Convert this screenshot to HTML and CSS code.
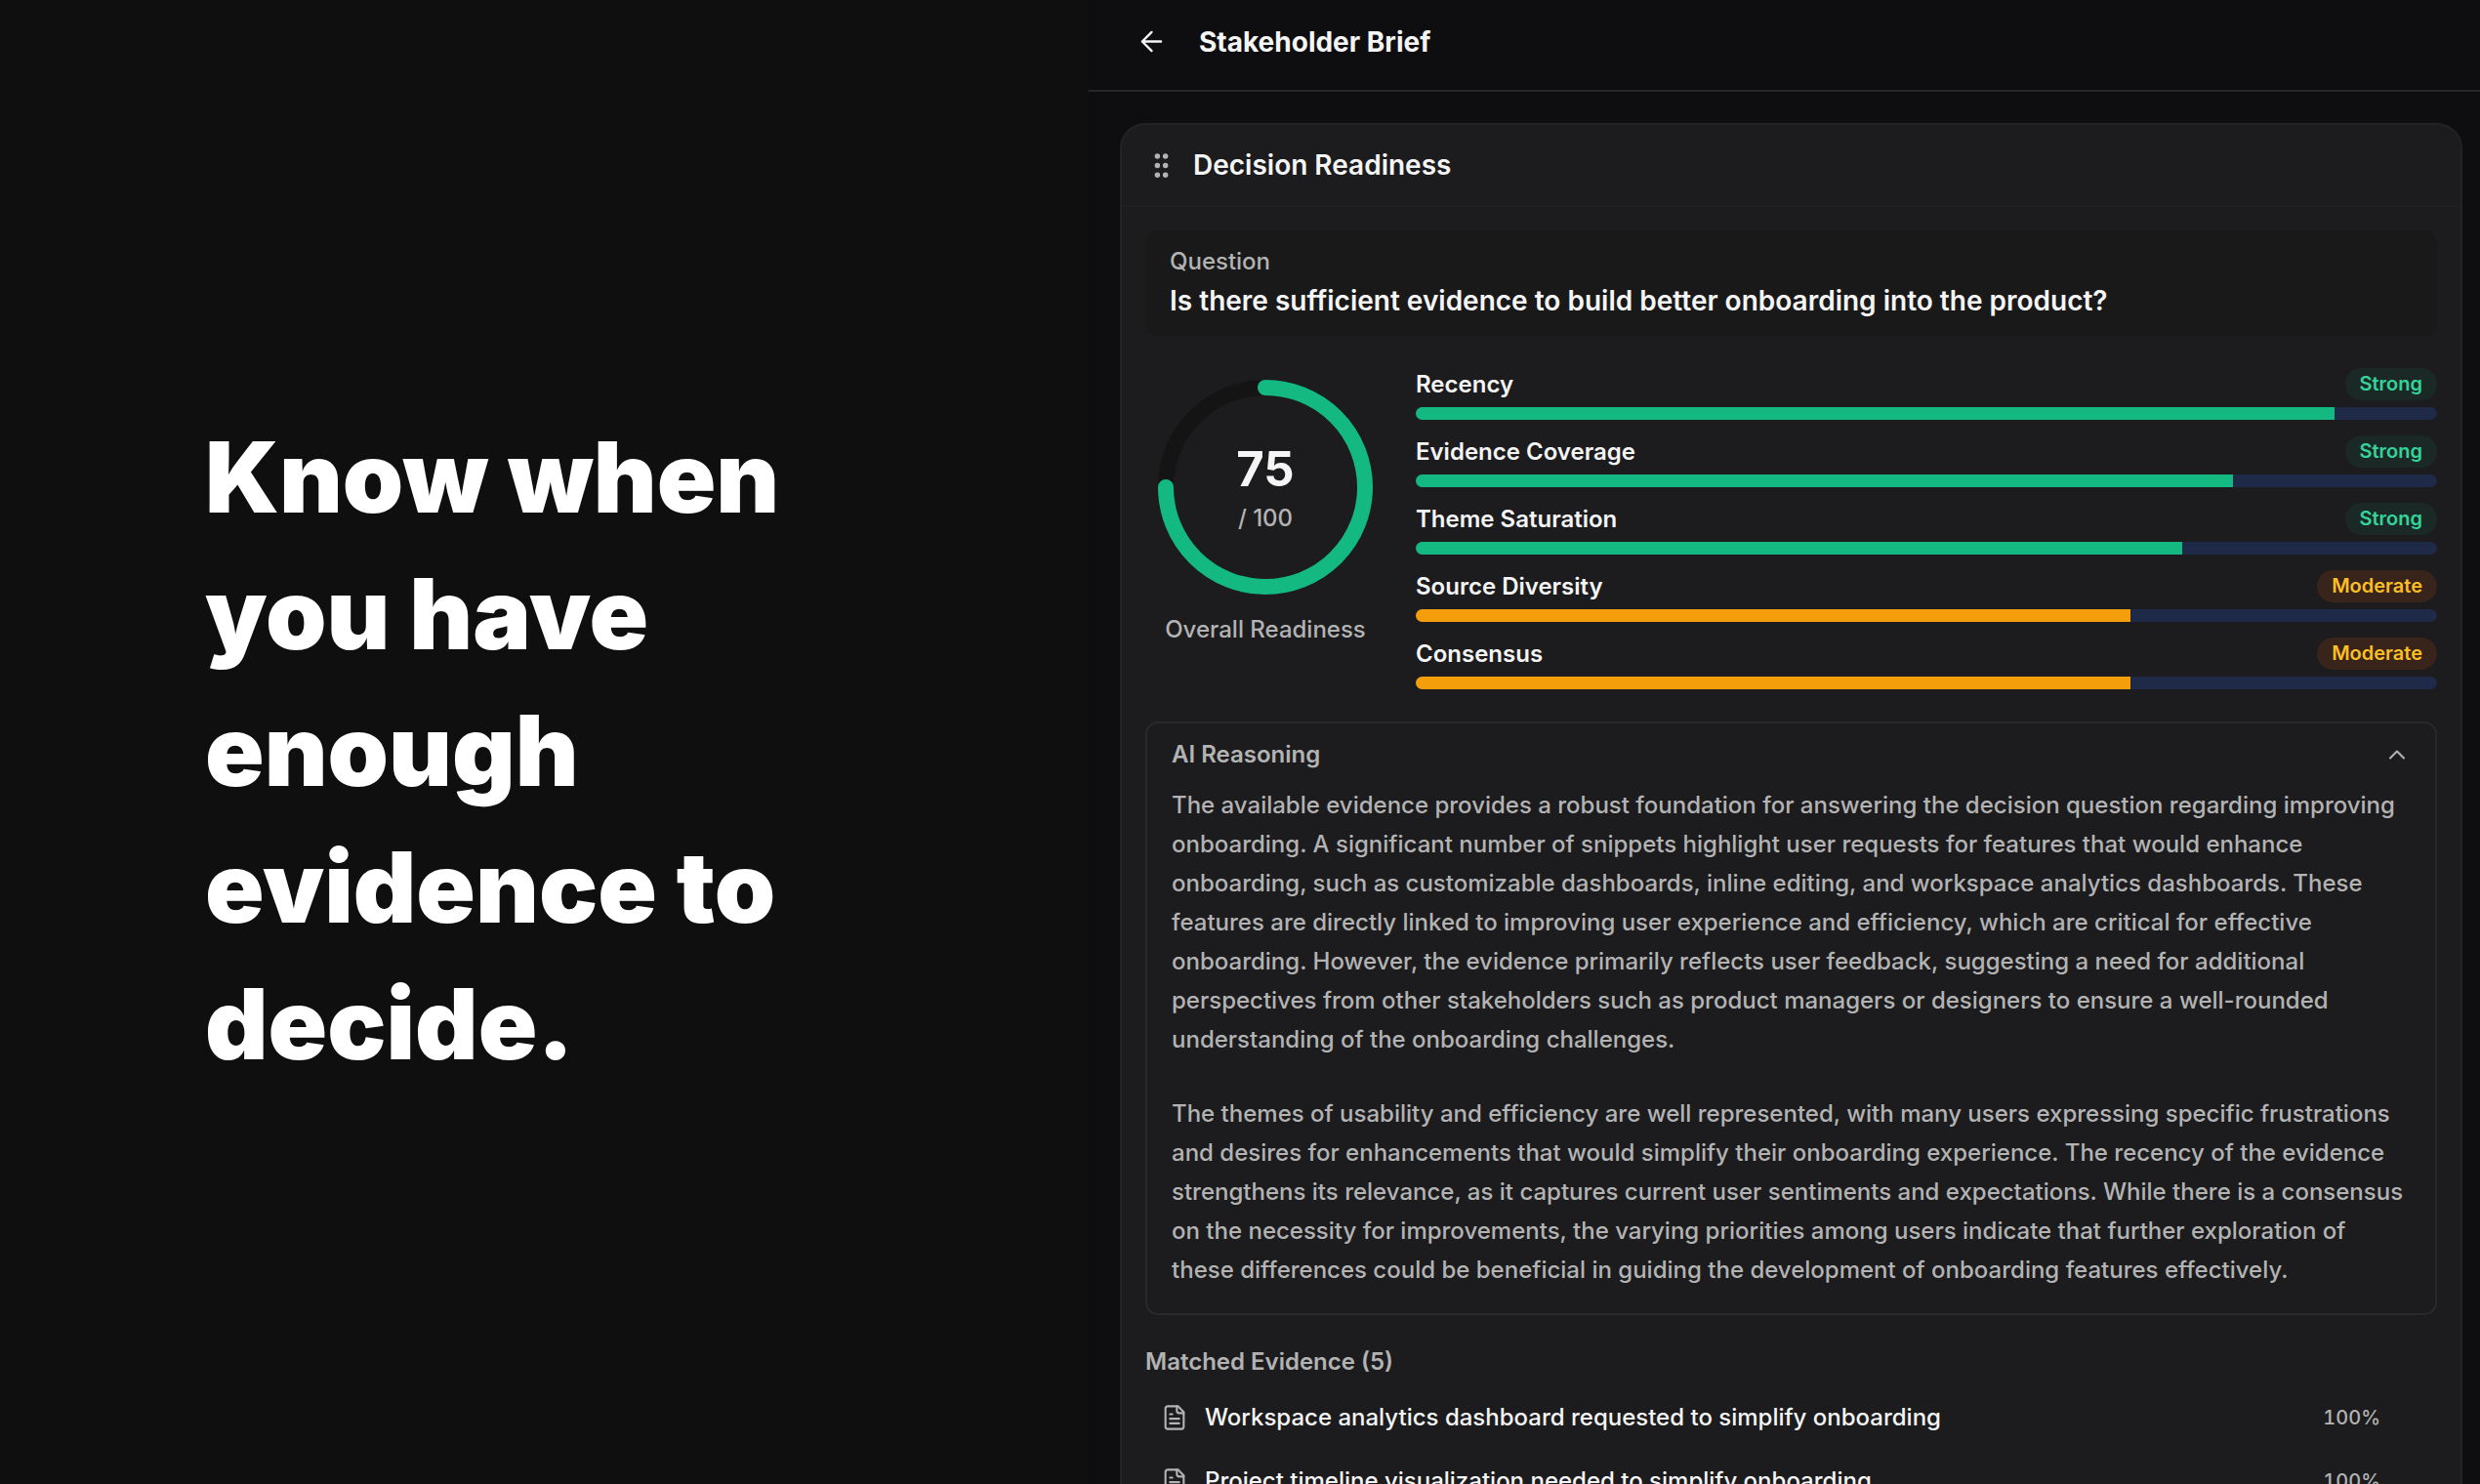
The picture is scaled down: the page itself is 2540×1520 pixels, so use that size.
FILE: index.html
```html
<!DOCTYPE html>
<html lang="en">

<head>
  <meta charset="UTF-8" />
  <meta name="viewport" content="width=device-width, initial-scale=1" />
  <title>Stakeholder Brief</title>
  <link rel="stylesheet" href="styles.css">
</head>

<body>
  <section class="hero">
    <h1>Know when you have enough evidence to decide.</h1>
  </section>

  <main class="panel">
    <header class="panel-header">
      <button class="icon-button" aria-label="Back">
        <svg class="icon-lg" viewBox="0 0 24 24"><path d="M12 19l-7-7 7-7M19 12H5" /></svg>
      </button>
      <h2>Stakeholder Brief</h2>
    </header>

    <article class="card">
      <div class="card-header">
        <svg class="icon-lg grip muted" viewBox="0 0 24 24">
          <circle cx="9" cy="5" r="1" /><circle cx="9" cy="12" r="1" /><circle cx="9" cy="19" r="1" />
          <circle cx="15" cy="5" r="1" /><circle cx="15" cy="12" r="1" /><circle cx="15" cy="19" r="1" />
        </svg>
        <h3>Decision Readiness</h3>
      </div>

      <div class="card-body">
        <div class="question">
          <p class="label">Question</p>
          <p class="question-text">Is there sufficient evidence to build better onboarding into the product?</p>
        </div>

        <div class="scores">
          <div class="gauge">
            <div class="ring">
              <svg viewBox="0 0 220 220">
                <circle class="ring-track" cx="110" cy="110" r="102" />
                <circle class="ring-value" cx="110" cy="110" r="102" pathLength="100" stroke-dasharray="75 100" transform="rotate(-90 110 110)" />
              </svg>
              <div class="ring-text">
                <strong>75</strong>
                <span>/ 100</span>
              </div>
            </div>
            <p>Overall Readiness</p>
          </div>

          <ul class="metrics">
            <li>
              <div class="metric-head"><span>Recency</span><span class="badge strong">Strong</span></div>
              <div class="bar strong"><div style="width: 90%"></div></div>
            </li>
            <li>
              <div class="metric-head"><span>Evidence Coverage</span><span class="badge strong">Strong</span></div>
              <div class="bar strong"><div style="width: 80%"></div></div>
            </li>
            <li>
              <div class="metric-head"><span>Theme Saturation</span><span class="badge strong">Strong</span></div>
              <div class="bar strong"><div style="width: 75%"></div></div>
            </li>
            <li>
              <div class="metric-head"><span>Source Diversity</span><span class="badge moderate">Moderate</span></div>
              <div class="bar moderate"><div style="width: 70%"></div></div>
            </li>
            <li>
              <div class="metric-head"><span>Consensus</span><span class="badge moderate">Moderate</span></div>
              <div class="bar moderate"><div style="width: 70%"></div></div>
            </li>
          </ul>
        </div>

        <div class="reasoning">
          <button class="reasoning-toggle" aria-expanded="true">
            <span>AI Reasoning</span>
            <svg class="icon-md" viewBox="0 0 24 24"><path d="M18 15l-6-6-6 6" /></svg>
          </button>
          <p>The available evidence provides a robust foundation for answering the decision question regarding improving onboarding. A significant number of snippets highlight user requests for features that would enhance onboarding, such as customizable dashboards, inline editing, and workspace analytics dashboards. These features are directly linked to improving user experience and efficiency, which are critical for effective onboarding. However, the evidence primarily reflects user feedback, suggesting a need for additional perspectives from other stakeholders such as product managers or designers to ensure a well-rounded understanding of the onboarding challenges.</p>
          <p>The themes of usability and efficiency are well represented, with many users expressing specific frustrations and desires for enhancements that would simplify their onboarding experience. The recency of the evidence strengthens its relevance, as it captures current user sentiments and expectations. While there is a consensus on the necessity for improvements, the varying priorities among users indicate that further exploration of these differences could be beneficial in guiding the development of onboarding features effectively.</p>
        </div>

        <h4>Matched Evidence (5)</h4>
        <ul class="evidence">
          <li>
            <svg class="icon-md muted" viewBox="0 0 24 24"><path d="M15 2H6a2 2 0 0 0-2 2v16a2 2 0 0 0 2 2h12a2 2 0 0 0 2-2V7z" /><path d="M14 2v4a2 2 0 0 0 2 2h4M10 9H8M16 13H8M16 17H8" /></svg>
            <span class="evidence-title">Workspace analytics dashboard requested to simplify onboarding</span>
            <span class="match">100%</span>
          </li>
          <li>
            <svg class="icon-md muted" viewBox="0 0 24 24"><path d="M15 2H6a2 2 0 0 0-2 2v16a2 2 0 0 0 2 2h12a2 2 0 0 0 2-2V7z" /><path d="M14 2v4a2 2 0 0 0 2 2h4M10 9H8M16 13H8M16 17H8" /></svg>
            <span class="evidence-title">Project timeline visualization needed to simplify onboarding</span>
            <span class="match">100%</span>
          </li>
        </ul>
      </div>
    </article>
  </main>
</body>

</html>
```
FILE: styles.css
```css
* {
  box-sizing: border-box;
}

body {
  margin: 0;
  height: 100vh;
  display: flex;
  overflow: hidden;
  background-color: #0f0f0f;
  color: #f5f5f5;
  font-family: Inter, "Liberation Sans", sans-serif;
  font-size: 24px;
  font-weight: 500;
  line-height: 40px;
}

h1,
h2,
h3,
h4,
p,
ul {
  margin: 0;
  padding: 0;
}

ul {
  list-style: none;
}

button {
  background: none;
  border: none;
  padding: 0;
  font: inherit;
  color: inherit;
  cursor: pointer;
}

svg {
  display: block;
  flex-shrink: 0;
  fill: none;
  stroke: currentColor;
  stroke-width: 2;
  stroke-linecap: round;
  stroke-linejoin: round;
}

.icon-lg {
  width: 33px;
  height: 33px;
  stroke-width: 1.7;
}

.icon-lg.grip {
  stroke-width: 2;
}

.icon-md {
  width: 28px;
  height: 28px;
  stroke-width: 1.8;
}

.muted {
  color: #b3b3b3;
}

/* left side */
.hero {
  flex: 0 0 1115px;
  display: flex;
  align-items: center;
  padding: 18px 240px 0 210px;
}

.hero h1 {
  color: #fff;
  font-size: 100px;
  font-weight: 900;
  line-height: 140px;
}

/* right side */
.panel {
  flex: 1;
  min-width: 0;
  background-color: #0e0e10;
}

.panel-header {
  display: flex;
  align-items: center;
  gap: 32px;
  height: 94px;
  padding: 0 48px 7px;
  border-bottom: 2px solid #27272a;
}

.panel-header h2 {
  font-size: 28px;
  font-weight: 700;
}

.card {
  margin: 32px 18px 0 32px;
  border: 2px solid #232325;
  border-radius: 26px;
  background-color: #1c1c1e;
}

.card-header {
  display: flex;
  align-items: center;
  gap: 16px;
  height: 84px;
  padding: 0 24px;
  border-bottom: 2px solid #202022;
}

.card-header h3 {
  font-size: 28px;
  font-weight: 600;
}

.card-body {
  padding: 24px;
}

.question {
  padding: 12px 25px 16px;
  border-radius: 13px;
  background-color: #19191a;
}

.question .label {
  color: #b3b3b3;
}

.question-text {
  font-size: 28px;
  font-weight: 600;
}

.scores {
  display: flex;
  gap: 44px;
  padding: 33px 0 33px 13px;
}

.gauge {
  width: 220px;
  padding-top: 12px;
  text-align: center;
  color: #b3b3b3;
  white-space: nowrap;
}

.gauge p {
  margin-top: 16px;
}

.ring {
  display: grid;
}

.ring svg,
.ring-text {
  grid-area: 1 / 1;
}

.ring-track,
.ring-value {
  stroke: #141415;
  stroke-width: 16;
}

.ring-value {
  stroke: #14b981;
}

.ring-text {
  display: flex;
  flex-direction: column;
  justify-content: center;
  padding-top: 4px;
}

.ring-text strong {
  color: #f5f5f5;
  font-size: 49px;
  font-weight: 700;
  line-height: 60px;
}

.metrics {
  flex: 1;
  display: flex;
  flex-direction: column;
  gap: 16px;
}

.metric-head {
  display: flex;
  justify-content: space-between;
  align-items: center;
  height: 33px;
  margin-bottom: 7px;
  font-weight: 600;
}

.badge {
  padding: 0 15px;
  border-radius: 17px;
  font-size: 20px;
  line-height: 33px;
}

.badge.strong {
  background-color: #1b2926;
  color: #34d399;
}

.badge.moderate {
  background-color: #38241b;
  color: #fbbf24;
}

.bar {
  height: 13px;
  border-radius: 7px;
  overflow: hidden;
  background-color: #1f2a48;
}

.bar div {
  height: 100%;
}

.bar.strong div {
  background-color: #14b981;
}

.bar.moderate div {
  background-color: #f59e0b;
}

.reasoning {
  padding: 12px 25px 24px;
  border: 2px solid #29292b;
  border-radius: 13px;
  color: #b3b3b3;
}

.reasoning-toggle {
  display: flex;
  justify-content: space-between;
  align-items: center;
  width: 100%;
  margin-bottom: 12px;
  font-weight: 600;
}

.reasoning p + p {
  margin-top: 36px;
}

h4 {
  margin: 28px 0 4px;
  color: #b3b3b3;
  font-size: 24px;
  font-weight: 600;
}

.evidence li {
  display: flex;
  align-items: center;
  gap: 17px;
  height: 65px;
  padding: 0 58px 0 16px;
}

.evidence-title {
  flex: 1;
}

.match {
  color: #b3b3b3;
  font-size: 20px;
  font-variant-numeric: tabular-nums;
}
```
